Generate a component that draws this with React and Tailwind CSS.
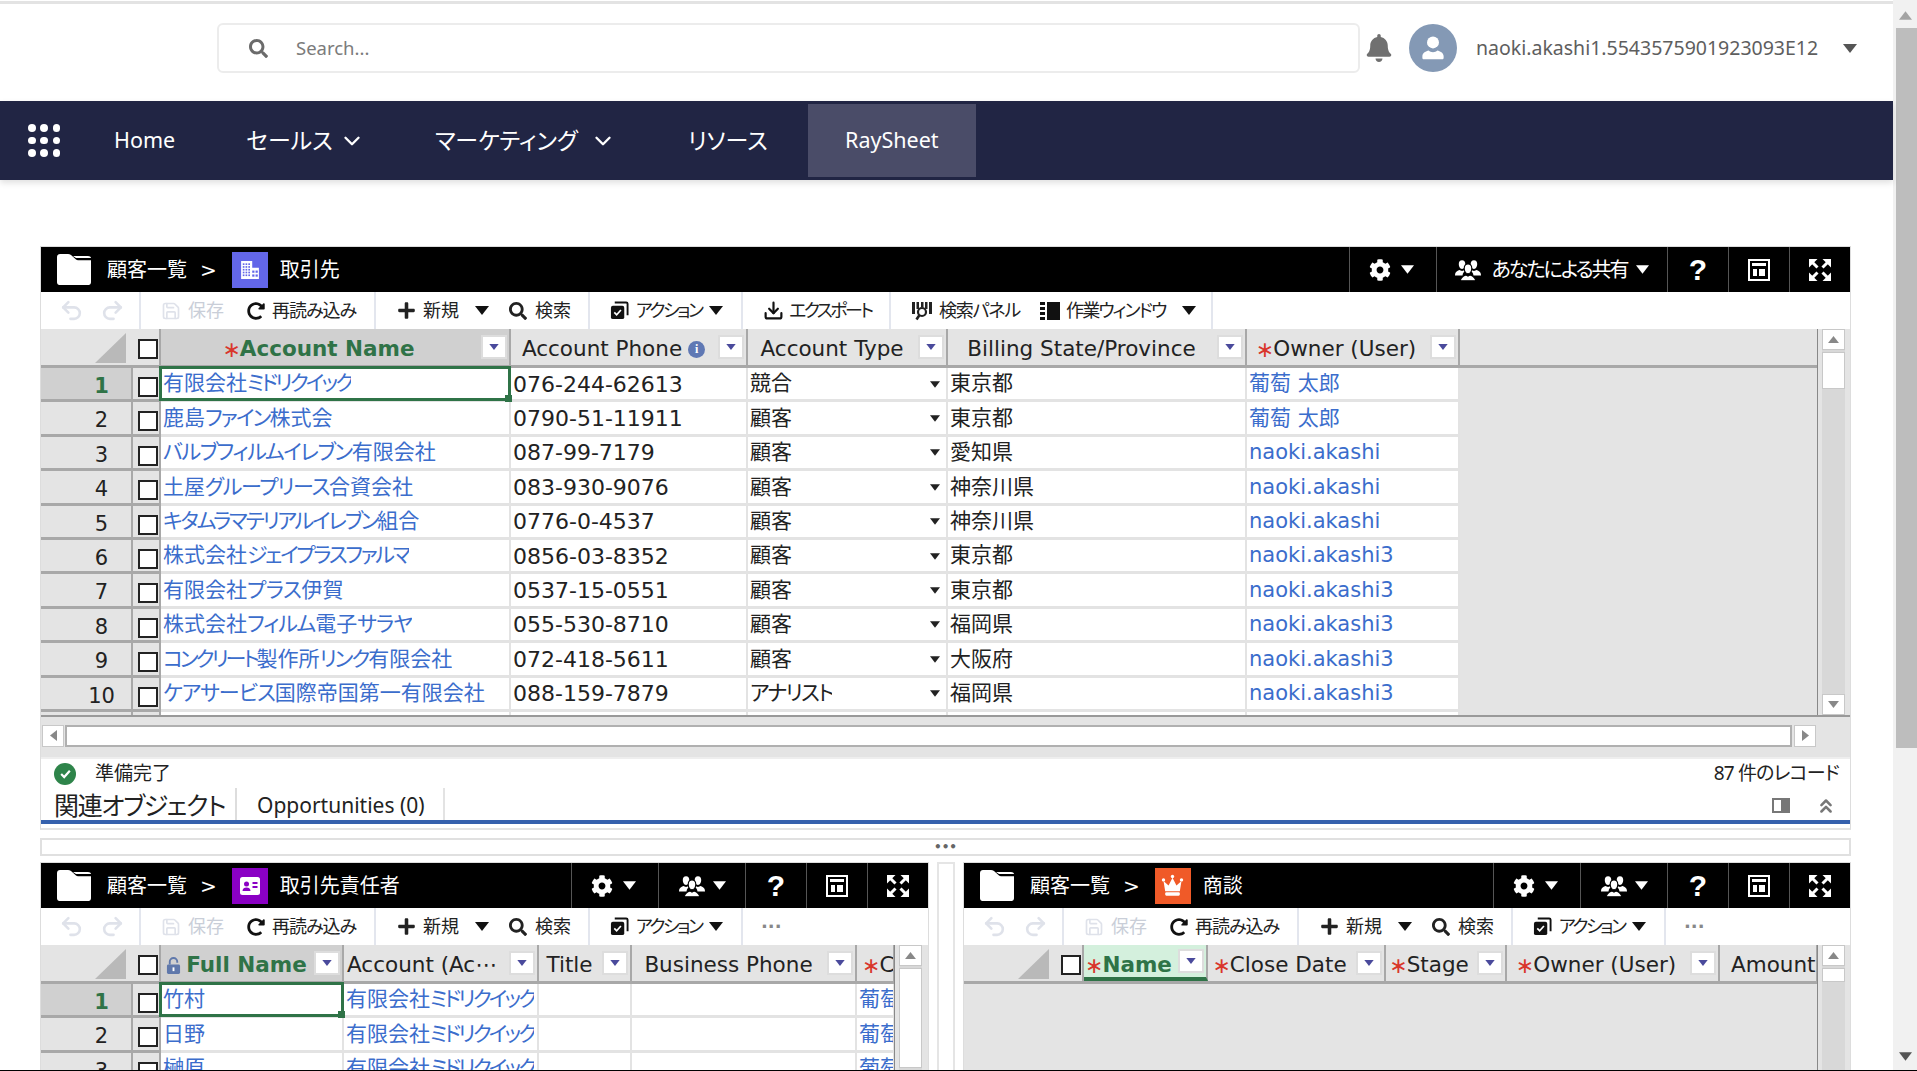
import { FaBell, FaCog, FaSearch, FaPlus, FaRedoAlt } from "react-icons/fa";
import { LuUndo2, LuRedo2, LuSave, LuChevronDown, LuDownload, LuChevronsUp } from "react-icons/lu";

const gridFont = "[font-family:'DejaVu_Sans','Noto_Sans_CJK_JP',sans-serif]";

const Caret = ({ className }) => (
  <svg viewBox="0 0 14 9" className={className}>
    <polygon points="0,0 14,0 7,9" fill="currentColor" />
  </svg>
);

const Folder = () => (
  <svg viewBox="0 0 34 31" className="w-[34px] h-[31px] shrink-0">
    <path d="M3 0h8c1 0 2 .4 3 1l5 4.500c.6.500 1.200.700 2 .700h13v22c0 1.500-1 2.800-2.500 2.800H2.500C1 31 0 29.700 0 28.200V3C0 1.300 1.300 0 3 0z" fill="#fff" />
    <path d="M16 2h15c1.500 0 3 .7 3 2H19z" fill="#fff" />
  </svg>
);

const BuildingIcon = () => (
  <svg viewBox="0 0 36 36" className="w-[20px] h-[20px]">
    <path d="M2 2h20v12h12v20H2z" fill="#fff" />
    {[6, 11, 16, 21, 26].map((y) =>
      [5, 10, 15].map((x) => <rect key={`${x}-${y}`} x={x} y={y} width="3" height="3" fill="#6366e8" />)
    )}
    {[19, 26].map((y) =>
      [22, 28].map((x) => <rect key={`b${x}-${y}`} x={x} y={y} width="4" height="4" fill="#6366e8" />)
    )}
  </svg>
);

const ContactIcon = () => (
  <svg viewBox="0 0 24 24" className="w-[24px] h-[24px]">
    <rect x="2" y="3" width="20" height="18" rx="2.500" fill="#fff" />
    <circle cx="8.500" cy="10" r="2.500" fill="#8a00c4" />
    <path d="M4.500 17c0-2.500 1.800-3.500 4-3.500s4 1 4 3.500z" fill="#8a00c4" />
    <rect x="14.500" y="8" width="5" height="2" fill="#8a00c4" />
    <rect x="14.500" y="12" width="5" height="2" fill="#8a00c4" />
  </svg>
);

const CrownIcon = () => (
  <svg viewBox="0 0 24 24" className="w-[27px] h-[27px]">
    <path d="M4 8l4.500 4L12 5l3.500 7L20 8l-1.500 9h-13z" fill="#fff" />
    <circle cx="4" cy="7" r="1.500" fill="#fff" />
    <circle cx="12" cy="4" r="1.500" fill="#fff" />
    <circle cx="20" cy="7" r="1.500" fill="#fff" />
    <rect x="5.500" y="18" width="13" height="3" rx="1" fill="#fff" />
  </svg>
);

const UsersIcon = ({ className }) => (
  <svg viewBox="0 0 24 24" className={className}>
    <path d="M6.500 3c2 0 3 1.600 3 3.500S8.500 11 6.500 11s-3-2.600-3-4.500S4.500 3 6.500 3zM17.500 3c2 0 3 1.600 3 3.500s-1 4.500-3 4.500-3-2.600-3-4.500 1-3.500 3-3.500z" fill="currentColor" />
    <path d="M0 16.500c0-2.500 2-3.600 4-4.500l2.500 1 2.500-1 1 .5c-2 1.200-3 2.600-3 4.500H0zM24 16.500c0-2.500-2-3.600-4-4.500l-2.500 1-2.500-1-1 .5c2 1.200 3 2.600 3 4.500h7z" fill="currentColor" />
    <path d="M12 6.500c2.300 0 3.500 1.900 3.500 4s-1.200 5-3.500 5-3.500-2.900-3.500-5 1.200-4 3.500-4z" fill="currentColor" stroke="#000" strokeWidth="1" />
    <path d="M5 22c0-3 2.500-4.500 5-5.500l2 1.200 2-1.200c2.500 1 5 2.500 5 5.500z" fill="currentColor" stroke="#000" strokeWidth="1" />
  </svg>
);

const LayoutIcon = () => (
  <svg viewBox="0 0 22 22" className="w-[22px] h-[22px]">
    <rect x="1" y="1" width="20" height="20" fill="none" stroke="#fff" strokeWidth="2" />
    <rect x="4" y="4" width="14" height="3" fill="#fff" />
    <rect x="5" y="10" width="4" height="7" fill="#fff" />
    <rect x="11" y="10" width="6" height="7" fill="#fff" />
  </svg>
);

const ExpandIcon = () => (
  <svg viewBox="0 0 22 22" className="w-[22px] h-[22px]" fill="#fff" stroke="#fff" strokeWidth="3">
    <path d="M0 0h8.500L0 8.500z" stroke="none" />
    <path d="M22 0h-8.500L22 8.500z" stroke="none" />
    <path d="M0 22h8.500L0 13.500z" stroke="none" />
    <path d="M22 22h-8.500L22 13.500z" stroke="none" />
    <path d="M3 3l5.500 5.500M19 3l-5.500 5.500M3 19l5.500-5.500M19 19l-5.500-5.500" fill="none" />
  </svg>
);

const ActionIcon = () => (
  <svg viewBox="0 0 20 20" className="w-[19px] h-[19px] shrink-0">
    <path d="M5 1.500h12a1.500 1.500 0 0 1 1.500 1.500v12" fill="none" stroke="#111" strokeWidth="2" />
    <rect x="1" y="5" width="14" height="14" rx="2" fill="#111" />
    <path d="M4.500 12l2.500 2.500 4.500-5" fill="none" stroke="#fff" strokeWidth="1.800" />
  </svg>
);

const PanelSearchIcon = () => (
  <svg viewBox="0 0 20 20" className="w-[20px] h-[20px] shrink-0">
    <rect x="0" y="1" width="3" height="12" fill="#222" />
    <rect x="4.500" y="1" width="2.500" height="7" fill="#222" />
    <rect x="9" y="1" width="2.500" height="5" fill="#222" />
    <rect x="13" y="1" width="2.500" height="7" fill="#222" />
    <rect x="17" y="1" width="3" height="12" fill="#222" />
    <circle cx="10" cy="11" r="4" fill="none" stroke="#222" strokeWidth="2.200" />
    <path d="M7.500 14l-3 4.500" stroke="#222" strokeWidth="2.600" />
  </svg>
);

const WindowIcon = () => (
  <svg viewBox="0 0 20 20" className="w-[20px] h-[20px] shrink-0">
    <rect x="0" y="1" width="5" height="3" fill="#111" />
    <rect x="0" y="6" width="5" height="3" fill="#111" />
    <rect x="0" y="11" width="5" height="3" fill="#111" />
    <rect x="0" y="16" width="5" height="3" fill="#111" />
    <rect x="7" y="1" width="13" height="18" fill="#111" />
  </svg>
);

const Filter = () => (
  <span className="shrink-0 w-[26px] h-[24px] bg-white border-2 border-[#dddddd] flex items-center justify-center">
    <Caret className="w-[10px] h-[6px] text-[#4a4a9c]" />
  </span>
);

const Box = ({ className = "" }) => (
  <span className={`block w-[20px] h-[20px] bg-white border-2 border-[#222222] ${className}`} />
);

const HeadButton = ({ w, className = "gap-[8px]", children }) => (
  <div className={`${w} h-full shrink-0 border-l border-[#555555] flex items-center justify-center ${className}`}>{children}</div>
);

function PanelHeader({ icon, iconBg, title, full }) {
  return (
    <div className="h-[45px] bg-black flex items-center text-white">
      <div className="flex-1 min-w-0 flex items-center pl-[16px]">
        <Folder />
        <span className="ml-[16px] text-[20px] whitespace-nowrap">顧客一覧</span>
        <span className="ml-[13px] text-[20px]">&gt;</span>
        <span className={`ml-[15px] w-[36px] h-[36px] flex items-center justify-center ${iconBg}`}>{icon}</span>
        <span className="ml-[12px] text-[20px] whitespace-nowrap">{title}</span>
      </div>
      <HeadButton w="w-[87px]" className="gap-[10px] pr-[4px]">
        <FaCog className="w-[22px] h-[22px]" />
        <Caret className="w-[13px] h-[9px]" />
      </HeadButton>
      <HeadButton w={full ? "w-[231px]" : "w-[87px]"}>
        <UsersIcon className="w-[26px] h-[26px]" />
        {full && <span className="ml-[2px] text-[20px] tracking-[-2px] whitespace-nowrap">あなたによる共有</span>}
        <Caret className="w-[13px] h-[9px]" />
      </HeadButton>
      <HeadButton w="w-[61px]">
        <span className="text-[30px] font-bold leading-none font-['Liberation_Sans',sans-serif]">?</span>
      </HeadButton>
      <HeadButton w="w-[61px]">
        <LayoutIcon />
      </HeadButton>
      <HeadButton w="w-[61px]">
        <ExpandIcon />
      </HeadButton>
    </div>
  );
}

const ToolGroup = ({ className, children }) => (
  <div className={`h-full shrink-0 flex items-center border-r-2 border-[#e3e6ee] ${className}`}>{children}</div>
);

const ToolText = ({ className = "", children }) => (
  <span className={`text-[18px] text-[#222222] whitespace-nowrap ${className}`}>{children}</span>
);

function Toolbar({ full }) {
  return (
    <div className="h-[37px] bg-white flex items-center">
      <ToolGroup className="w-[100px] pl-[18px] gap-[16px] text-[#dfe2ea]">
        <LuUndo2 className="w-[25px] h-[25px] stroke-[2.5]" />
        <LuRedo2 className="w-[25px] h-[25px] stroke-[2.5]" />
      </ToolGroup>
      <ToolGroup className="w-[235px] pl-[20px]">
        <LuSave className="w-[20px] h-[20px] text-[#dfe2ea]" />
        <ToolText className="ml-[7px] text-[#c9ced8]">保存</ToolText>
        <FaRedoAlt className="ml-[23px] w-[18px] h-[18px] text-[#111111]" />
        <ToolText className="ml-[7px] tracking-[-1px]">再読み込み</ToolText>
      </ToolGroup>
      <ToolGroup className="w-[214px] pl-[21px]">
        <FaPlus className="w-[19px] h-[19px] text-[#222222]" />
        <ToolText className="ml-[7px]">新規</ToolText>
        <Caret className="ml-[16px] w-[14px] h-[9px] text-[#111111]" />
        <FaSearch className="ml-[20px] w-[18px] h-[18px] text-[#222222]" />
        <ToolText className="ml-[8px]">検索</ToolText>
      </ToolGroup>
      <ToolGroup className="w-[153px] pl-[20px]">
        <ActionIcon />
        <ToolText className="ml-[7px] tracking-[-2.5px]">アクション</ToolText>
        <Caret className="ml-[7px] w-[14px] h-[9px] text-[#111111]" />
      </ToolGroup>
      {full ? (
        <>
          <ToolGroup className="w-[148px] pl-[20px]">
            <LuDownload className="w-[21px] h-[21px] text-[#111111] stroke-[2.5]" />
            <ToolText className="ml-[5px] tracking-[-2.600px]">エクスポート</ToolText>
          </ToolGroup>
          <ToolGroup className="w-[322px] pl-[21px]">
            <PanelSearchIcon />
            <ToolText className="ml-[7px] tracking-[-1.200px]">検索パネル</ToolText>
            <span className="ml-[20px]">
              <WindowIcon />
            </span>
            <ToolText className="ml-[6px] tracking-[-1.900px]">作業ウィンドウ</ToolText>
            <Caret className="ml-[17px] w-[14px] h-[9px] text-[#111111] shrink-0" />
          </ToolGroup>
        </>
      ) : (
        <span className="ml-[18px] text-[#888888] text-[18px] font-bold leading-none">···</span>
      )}
    </div>
  );
}

const LockIcon = () => (
  <svg viewBox="0 0 16 20" className="w-[15px] h-[19px] shrink-0 mr-[5px]">
    <path d="M4 9V6a4 4 0 0 1 8 0v1" fill="none" stroke="#5f78ab" strokeWidth="2" />
    <rect x="1" y="9" width="14" height="10" rx="1.500" fill="#5f78ab" />
    <rect x="7" y="12" width="2" height="4" fill="#fff" />
  </svg>
);

const InfoIcon = () => (
  <span className="shrink-0 ml-[6px] w-[17px] h-[17px] rounded-full bg-[#5f78b4] text-white text-[12px] font-bold leading-[17px] text-center font-['Liberation_Serif',serif]">
    i
  </span>
);

function HeadCell({ col }) {
  const soft = col.active === "soft";
  const bg = soft ? "bg-[#d4f0dd] border-b-[4px] border-b-[#2f7347]" : col.active ? "bg-[#d0d0d0]" : "";
  const txt = col.active ? "text-[#2f7347] font-bold" : "text-[#222222]";
  return (
    <div className={`${col.w} shrink-0 h-full flex items-center border-r-2 border-r-[#a8a8a8] overflow-hidden ${bg}`}>
      <div className={`flex-1 min-w-0 flex items-center whitespace-nowrap text-[21.500px] ${soft ? "pt-[9px]" : "pt-[5px]"} ${col.left ? col.pad || "pl-[3px]" : "justify-center"} ${txt}`}>
        {col.lock && <LockIcon />}
        {col.req && <span className="text-[#d9362b] font-normal text-[22px] leading-none -ml-[3px] -mr-[1px]">∗</span>}
        <span>{col.label}</span>
        {col.info && <InfoIcon />}
      </div>
      {!col.noFilter && (
        <span className="mr-[2px] ml-[2px]">
          <Filter />
        </span>
      )}
    </div>
  );
}

function DataCell({ col, value, active }) {
  return (
    <div className={`${col.w} shrink-0 relative h-full flex items-center justify-between pl-[2px] pt-[1px] bg-white border-r-2 border-b-[3px] border-[#e3e3e3] whitespace-nowrap overflow-visible ${col.big ? "text-[22px]" : "text-[21px]"}`}>
      <span className={`overflow-hidden ${col.link ? "text-[#3b6dcc]" : "text-[#222222]"}`}>{value}</span>
      {col.select && <Caret className="mr-[6px] w-[10px] h-[7px] text-[#222222]" />}
      {active && (
        <span className="absolute -left-[2px] -top-[2px] -right-[2px] -bottom-[2px] border-[3px] border-[#2f7347] z-10">
          <span className="absolute -right-[4px] -bottom-[4px] w-[7px] h-[7px] bg-[#2f7347]" />
        </span>
      )}
    </div>
  );
}

function RowHead({ n, active }) {
  return (
    <div className="flex h-[34.4px] shrink-0">
      <div className={`w-[90px] shrink-0 pl-[31px] text-center pt-[3px] border-b-[3px] border-[#a8a8a8] text-[21px] ${active ? "bg-[#d0d0d0] text-[#2f7347] font-bold" : "bg-[#e4e4e4] text-[#222222]"}`}>
        {n}
      </div>
      <div className="w-[30px] shrink-0 bg-[#e4e4e4] border-l-2 border-r-2 border-[#a8a8a8] border-b-[3px] border-b-[#a8a8a8] pl-[5px] pt-[9px]">
        <Box />
      </div>
    </div>
  );
}

function VScroll({ thumb, w }) {
  return (
    <div className={`${w} shrink-0 h-full bg-[#e4e4e4] border-l border-[#888888] pl-[4px]`}>
      <div className="w-[23px] h-full bg-[#d8d8d8] flex flex-col">
        <div className="h-[21px] shrink-0 bg-white border border-[#c8c8c8] flex items-center justify-center">
          <Caret className="w-[11px] h-[7px] text-[#888888] rotate-180" />
        </div>
        <div className={`${thumb} shrink-0 mt-[2px] bg-white border border-[#c8c8c8]`} />
        <div className="flex-1" />
        <div className="h-[21px] shrink-0 bg-white border border-[#c8c8c8] flex items-center justify-center">
          <Caret className="w-[11px] h-[7px] text-[#888888]" />
        </div>
      </div>
    </div>
  );
}

function Grid({ cols, rows, className, scrollW, thumb }) {
  return (
    <div className={`flex bg-[#e4e4e4] overflow-hidden ${className}`}>
      <div className="flex-1 min-w-0 flex flex-col overflow-hidden">
        <div className="h-[39px] shrink-0 flex border-b-[3px] border-[#a8a8a8]">
          <div className="w-[90px] shrink-0 relative">
            <div className="absolute left-[54px] top-[4px] w-[31px] h-[30px] bg-[#b9b9b9] [clip-path:polygon(100%_0,100%_100%,0_100%)]" />
          </div>
          <div className="w-[30px] shrink-0 pl-[7px] pt-[10px] border-r-2 border-[#a8a8a8]">
            <Box />
          </div>
          {cols.map((c) => (
            <HeadCell key={c.label} col={c} />
          ))}
        </div>
        {rows.map((r, i) => (
          <div key={i} className="flex shrink-0 h-[34.4px]">
            <RowHead n={r.n} active={i === 0} />
            {cols.map((c, j) => (
              <DataCell key={j} col={c} value={r.cells[j]} active={i === 0 && j === 0} />
            ))}
          </div>
        ))}
      </div>
      <VScroll w={scrollW} thumb={thumb} />
    </div>
  );
}

// katakana in the reference is set much tighter than in Noto
const Kana = ({ t, children }) => <span className={t}>{children}</span>;

const midori = (
  <>
    有限会社<Kana t="tracking-[-2.800px]">ミドリクイック</Kana>
  </>
);

const mainCols = [
  { label: "Account Name", w: "w-[350px]", req: true, active: true, link: true },
  { label: "Account Phone", w: "w-[237px]", info: true, big: true },
  { label: "Account Type", w: "w-[200px]", select: true },
  { label: "Billing State/Province", w: "w-[299px]" },
  { label: "Owner (User)", w: "w-[213px]", req: true, link: true },
];

const mainRows = [
  [midori, "076-244-62613", "競合", "東京都", "葡萄 太郎"],
  [<>鹿島<Kana t="tracking-[-1.800px]">ファイン</Kana>株式会</>, "0790-51-11911", "顧客", "東京都", "葡萄 太郎"],
  [<><Kana t="tracking-[-1.400px]">バルブフィルムイレブン</Kana>有限会社</>, "087-99-7179", "顧客", "愛知県", "naoki.akashi"],
  [<>土屋<Kana t="tracking-[-1.300px]">グループリース</Kana>合資会社</>, "083-930-9076", "顧客", "神奈川県", "naoki.akashi"],
  [<><Kana t="tracking-[-2.200px]">キタムラマテリアルイレブン</Kana>組合</>, "0776-0-4537", "顧客", "神奈川県", "naoki.akashi"],
  [<>株式会社<Kana t="tracking-[-2.300px]">ジェイプラスファルマ</Kana></>, "0856-03-8352", "顧客", "東京都", "naoki.akashi3"],
  [<>有限会社<Kana t="tracking-[-0.500px]">プラス</Kana>伊賀</>, "0537-15-0551", "顧客", "東京都", "naoki.akashi3"],
  [<>株式会社<Kana t="tracking-[-1px]">フィルム</Kana>電子<Kana t="tracking-[-1px]">サラヤ</Kana></>, "055-530-8710", "顧客", "福岡県", "naoki.akashi3"],
  [<><Kana t="tracking-[-3px]">コンクリート</Kana>製作所<Kana t="tracking-[-2px]">リンク</Kana>有限会社</>, "072-418-5611", "顧客", "大阪府", "naoki.akashi3"],
  [<><Kana t="tracking-[-1px]">ケアサービス</Kana>国際帝国第一有限会社</>, "088-159-7879", <Kana t="tracking-[-1.800px]">アナリスト</Kana>, "福岡県", "naoki.akashi3"],
  ["", "", "", "", ""],
].map((cells, i) => ({ n: i < 10 ? i + 1 : "", cells }));

const contactCols = [
  { label: "Full Name", w: "w-[183px]", lock: true, active: true, link: true },
  { label: "Account (Ac⋯", w: "w-[195px]", left: true, link: true },
  { label: "Title", w: "w-[93px]" },
  { label: "Business Phone", w: "w-[225px]" },
  { label: "C", w: "w-[38px]", req: true, left: true, pad: "pl-[8px]", noFilter: true, link: true },
];

const contactRows = [
  ["竹村", midori, "", "", "葡萄"],
  ["日野", midori, "", "", "葡萄"],
  ["榊原", midori, "", "", "葡萄"],
].map((cells, i) => ({ n: i + 1, cells }));

const dealCols = [
  { label: "Name", w: "w-[124px]", req: true, active: "soft" },
  { label: "Close Date", w: "w-[178px]", req: true },
  { label: "Stage", w: "w-[121px]", req: true },
  { label: "Owner (User)", w: "w-[213px]", req: true },
  { label: "Amount", w: "w-[98px]", noFilter: true, left: true, pad: "pl-[11px]" },
];

function NavItem({ label, jp, chevron }) {
  return (
    <div className="flex items-center">
      <span className={`text-white whitespace-nowrap ${jp ? "text-[23px]" : "text-[21.500px]"}`}>{label}</span>
      {chevron && <LuChevronDown className={`${chevron} w-[26px] h-[26px] text-white stroke-[2.2]`} />}
    </div>
  );
}

export default function App() {
  return (
    <div className="relative w-[1917px] h-[1071px] overflow-hidden bg-white flex font-['Noto_Sans','Noto_Sans_CJK_JP',sans-serif] [font-feature-settings:'palt']">
      <div className="w-[1893px] shrink-0 flex flex-col">
        <div className="h-[3px] mt-px bg-[#e3e3e3] shrink-0" />
        <div className="h-[97px] shrink-0 flex items-center pl-[217px] pb-[9px]">
          <div className="w-[1143px] h-[50px] border-2 border-[#ececec] rounded-[6px] flex items-center pl-[30px]">
            <FaSearch className="w-[19px] h-[19px] text-[#6b6b6b]" />
            <span className="ml-[28px] text-[18.500px] text-[#7b7b7b]">Search...</span>
          </div>
          <FaBell className="ml-[5px] w-[28px] h-[28px] text-[#707070]" />
          <div className="ml-[16px] w-[48px] h-[48px] rounded-full bg-[#8499b5] flex items-center justify-center">
            <svg viewBox="0 0 24 24" className="w-[30px] h-[30px]" fill="#fff">
              <circle cx="12" cy="7.500" r="4.800" />
              <path d="M3.500 20v-1.500c0-2.800 3-3.800 5-4.500 1 1 2 1.300 3.500 1.300s2.500-.3 3.500-1.300c2 .7 5 1.700 5 4.500V20c0 .8-.6 1-1 1H4.500c-.4 0-1-.2-1-1z" />
            </svg>
          </div>
          <span className="ml-[19px] text-[19.500px] text-[#5e5e5e] whitespace-nowrap">naoki.akashi1.5543575901923093E12</span>
          <Caret className="ml-[25px] w-[14px] h-[9px] text-[#555555]" />
        </div>
        <div className="h-[79px] shrink-0 bg-[#212544] flex items-center shadow-[0_3px_6px_rgba(0,0,0,0.12)] relative z-10">
          <div className="ml-[28px] w-[32px] grid grid-cols-3 gap-[5px]">
            {[...Array(9)].map((_, i) => (
              <span key={i} className="w-[7.500px] h-[7.500px] rounded-full bg-white" />
            ))}
          </div>
          <div className="ml-[54px]">
            <NavItem label="Home" />
          </div>
          <div className="ml-[71px]">
            <NavItem jp label="セールス" chevron="ml-[6px]" />
          </div>
          <div className="ml-[70px]">
            <NavItem jp label="マーケティング" chevron="ml-[12px]" />
          </div>
          <div className="ml-[72px]">
            <NavItem jp label="リソース" />
          </div>
          <div className="ml-[40px] w-[168px] h-[73px] bg-[#4a4c68] flex items-center justify-center">
            <NavItem label="RaySheet" />
          </div>
        </div>

        <div className={`flex-1 pt-[66px] pl-[40px] w-[1851px] ${gridFont}`}>
          <div className="border border-[#dddddd] border-b-2 border-b-[#e3e3e3] bg-white">
            <PanelHeader full icon={<BuildingIcon />} iconBg="bg-[#6366e8]" title="取引先" />
            <Toolbar full />
            <Grid cols={mainCols} rows={mainRows} className="h-[386px]" scrollW="w-[33px]" thumb="h-[37px]" />
            <div className="h-[42px] bg-[#e4e4e4] border-t-2 border-[#999999] flex items-center px-[1px] pb-[3px]">
              <div className="w-[22px] h-[22px] bg-white border border-[#c8c8c8] flex items-center justify-center">
                <Caret className="w-[11px] h-[7px] text-[#888888] rotate-90" />
              </div>
              <div className="ml-[1px] w-[1727px] h-[22px] bg-white border-2 border-[#b0b0b0]" />
              <div className="ml-[2px] w-[22px] h-[22px] bg-white border border-[#c8c8c8] flex items-center justify-center">
                <Caret className="w-[11px] h-[7px] text-[#888888] -rotate-90" />
              </div>
            </div>
            <div className="h-[31px] border-t-2 border-[#eeeeee] flex items-center justify-between pl-[13px] pr-[11px] text-[19px] text-[#222222] [font-family:'Noto_Sans','Noto_Sans_CJK_JP',sans-serif]">
              <div className="flex items-center">
                <span className="w-[22px] h-[22px] rounded-full bg-[#2e844a] flex items-center justify-center">
                  <svg viewBox="0 0 12 12" className="w-[13px] h-[13px]">
                    <path d="M2 6.500l2.800 2.800L10 3.500" fill="none" stroke="#fff" strokeWidth="2" />
                  </svg>
                </span>
                <span className="ml-[19px]">準備完了</span>
              </div>
              <span className="tracking-[-0.800px]">87 件のレコード</span>
            </div>
            <div className="h-[32px] flex items-stretch text-[#222222] [font-family:'Noto_Sans','Noto_Sans_CJK_JP',sans-serif]">
              <div className="pl-[13px] w-[196px] border-r-2 border-[#dddddd] text-[25px] tracking-[-1.300px] leading-[34px] whitespace-nowrap">関連オブジェクト</div>
              <div className="w-[208px] pl-[20px] border-r-2 border-[#e3e3e3] text-[21px] leading-[34px] whitespace-nowrap">Opportunities (0)</div>
              <div className="flex-1 flex items-center justify-end pr-[13px] pt-[3px]">
                <span className="w-[18px] h-[15px] border-2 border-[#777777] flex justify-end">
                  <span className="w-[7px] h-full bg-[#777777]" />
                </span>
                <LuChevronsUp className="ml-[25px] w-[22px] h-[24px] text-[#777777] stroke-[2.8]" />
              </div>
            </div>
            <div className="h-[4px] bg-[#3561ad]" />
            <div className="h-[4px]" />
          </div>

          <div className="mt-[8px] h-[18px] border-2 border-[#e0e0e0] flex items-center justify-center text-[#666666] text-[12px] font-bold leading-none">
            •••
          </div>

          <div className="mt-[6px] flex items-start">
            <div className="w-[889px] shrink-0 border border-[#dddddd] bg-white">
              <PanelHeader icon={<ContactIcon />} iconBg="bg-[#8a00c4]" title="取引先責任者" />
              <Toolbar />
              <Grid cols={contactCols} rows={contactRows} className="h-[200px]" scrollW="w-[34px]" thumb="h-[100px]" />
            </div>
            <div className="ml-[8px] w-[18px] h-[220px] shrink-0 border-2 border-[#e5e5e5]" />
            <div className="ml-[8px] flex-1 min-w-0 border border-[#dddddd] bg-white">
              <PanelHeader icon={<CrownIcon />} iconBg="bg-[#f05a28]" title="商談" />
              <Toolbar />
              <Grid cols={dealCols} rows={[]} className="h-[200px]" scrollW="w-[33px]" thumb="h-[14px]" />
            </div>
          </div>
        </div>
      </div>

      <div className="w-[24px] shrink-0 bg-[#f1f1f1] flex flex-col items-center">
        <div className="h-[28px] shrink-0 flex items-center justify-center pt-[2px]">
          <Caret className="w-[13px] h-[9px] text-[#a3a3a3] rotate-180" />
        </div>
        <div className="w-[21px] h-[720px] shrink-0 ml-[2px] bg-[#bdbdbd]" />
        <div className="flex-1" />
        <div className="h-[24px] shrink-0 pb-[5px] flex items-center justify-center">
          <Caret className="w-[13px] h-[9px] text-[#555555]" />
        </div>
      </div>
      <div className="absolute left-0 right-0 bottom-0 h-px bg-black" />
    </div>
  );
}
